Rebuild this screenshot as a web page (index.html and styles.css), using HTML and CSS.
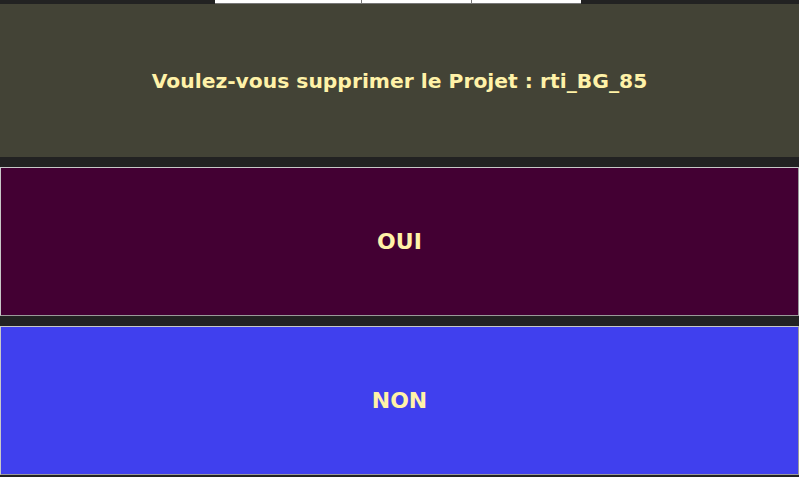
FILE: index.html
```html
<!DOCTYPE html>
<html>
<head>
<meta charset="utf-8">
<link rel="stylesheet" href="styles.css">
</head>
<body>
<div class="screen">
  <div class="tabs">
    <div class="tab t1"></div>
    <div class="tab t2"></div>
    <div class="tab t3"></div>
  </div>
  <div class="header">Voulez-vous supprimer le Projet : rti_BG_85</div>
  <div class="btn oui">OUI</div>
  <div class="btn non">NON</div>
</div>
</body>
</html>
```
FILE: styles.css
```css
html, body {
  margin: 0;
  padding: 0;
  background: #222222;
}
.screen {
  width: 799px;
  height: 477px;
  display: flex;
  flex-direction: column;
  font-family: "DejaVu Sans", sans-serif;
  font-weight: bold;
  color: #fff2a8;
}
.tabs {
  display: flex;
  height: 4px;
  padding-left: 215px;
}
.tab {
  height: 3px;
  background: #ffffff;
  border-bottom: 1px solid #777777;
}
.t1 { width: 146px; border-right: 1px solid #777; }
.t2 { width: 109px; border-right: 1px solid #777; }
.t3 { width: 109px; }
.header {
  height: 153px;
  background: #434336;
  display: flex;
  align-items: center;
  justify-content: center;
  font-size: 20.3px;
}
.btn {
  box-sizing: border-box;
  height: 149px;
  display: flex;
  align-items: center;
  justify-content: center;
  font-size: 22px;
  border: 1px solid #c8c8c8;
  border-right-color: #9a9a9a;
  border-bottom-color: #9a9a9a;
}
.oui {
  margin-top: 10px;
  background: #430033;
}
.non {
  margin-top: 10px;
  background: #4040ee;
}
```
